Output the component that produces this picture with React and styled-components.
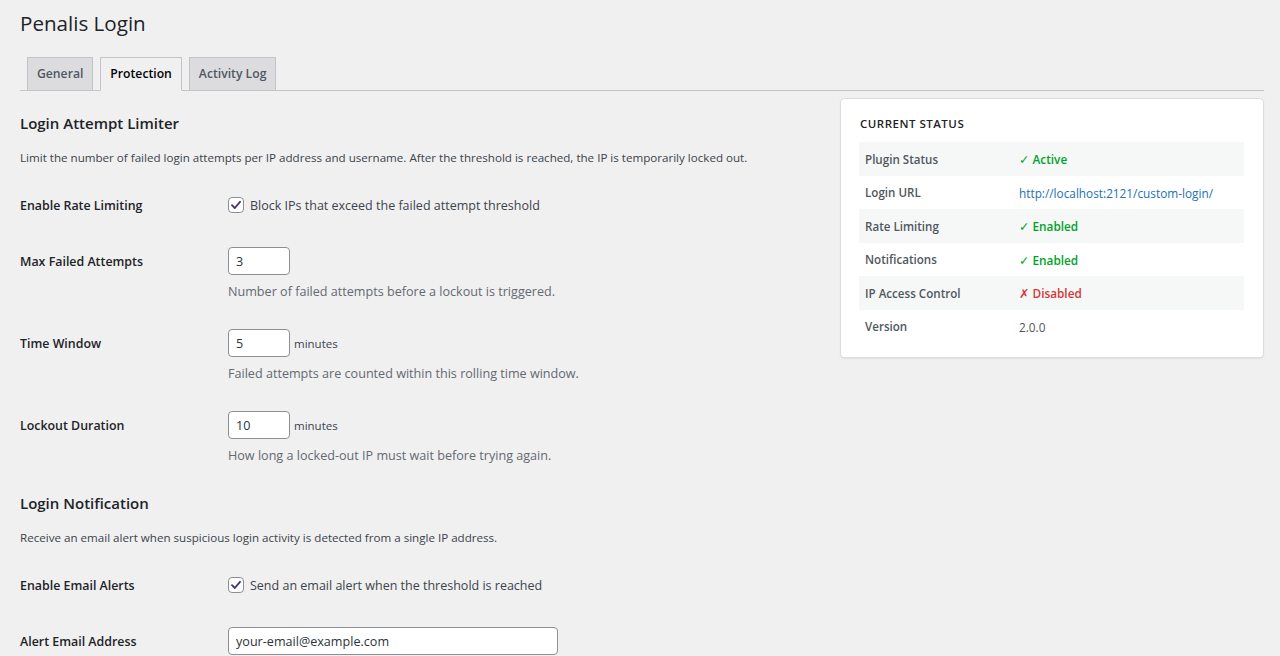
import React from "react";
import styled, { createGlobalStyle } from "styled-components";

const GlobalStyle = createGlobalStyle`
  html, body {
    margin: 0;
    padding: 0;
    background: #f0f0f1;
    color: #3c434a;
    font-family: "Open Sans", "Noto Sans", sans-serif;
    font-size: 13px;
  }
  * {
    box-sizing: border-box;
  }
`;

const Wrap = styled.div`
  padding: 9px 16px 0 20px;
  height: 656px;
  overflow: hidden;
`;

const Title = styled.h1`
  margin: 0;
  font-size: 20.6px;
  line-height: 28px;
  font-weight: 400;
  color: #1d2327;
`;

const TabBar = styled.nav`
  display: flex;
  margin-top: 20px;
  border-bottom: 1px solid #c3c4c7;
`;

const Tab = styled.a`
  margin-left: 7px;
  margin-bottom: -1px;
  padding: 4px 9px;
  font-size: 12.2px;
  line-height: 24px;
  font-weight: 600;
  border: 1px solid #c3c4c7;
  background: ${(p) => (p.$active ? "#f0f0f1" : "#dcdcde")};
  color: ${(p) => (p.$active ? "#000" : "#50575e")};
  border-bottom: 1px solid ${(p) => (p.$active ? "#f0f0f1" : "#c3c4c7")};
  text-decoration: none;
`;

const Columns = styled.div`
  display: flex;
  align-items: flex-start;
  gap: 20px;
`;

const Main = styled.div`
  flex: 1;
`;

const SectionTitle = styled.h2`
  margin: ${(p) => p.$top}px 0 0;
  font-size: 15px;
  line-height: 22px;
  font-weight: 600;
  color: #1d2327;
`;

const SectionIntro = styled.p`
  margin: 15px 0 10px;
  font-size: 11.6px;
  line-height: 18px;
  color: #3c434a;
`;

const FieldRow = styled.div`
  display: grid;
  grid-template-columns: 208px 1fr;
  padding: 14px 0;
`;

const FieldLabel = styled.label`
  height: 28px;
  padding-top: 2px;
  font-size: 12.4px;
  line-height: 26px;
  font-weight: 600;
  color: #1d2327;
`;

const FieldControl = styled.div`
  display: flex;
  flex-direction: column;
`;

const ControlLine = styled.div`
  display: flex;
  align-items: center;
  height: 28px;
  gap: 4px;
`;

const CheckLabel = styled.label`
  display: flex;
  align-items: center;
  gap: 6px;
  font-size: 12.5px;
  color: #3c434a;
`;

const Box = styled.span`
  width: 16px;
  height: 16px;
  border: 1px solid #8c8f94;
  border-radius: 4px;
  background: #fff;
  display: inline-flex;
  align-items: center;
  justify-content: center;
`;

const TextInput = styled.input`
  width: ${(p) => p.$width}px;
  height: 28px;
  padding: 0 7px;
  border: 1px solid #8c8f94;
  border-radius: 4px;
  background: #fff;
  font-family: inherit;
  font-size: 12.6px;
  color: #2c3338;
  outline: none;
`;

const Unit = styled.span`
  font-size: 11.5px;
  color: #3c434a;
`;

const Help = styled.p`
  margin: 7px 0 0;
  font-size: 12.6px;
  line-height: 19px;
  color: #646970;
`;

const Card = styled.aside`
  width: 424px;
  margin-top: 7px;
  padding: 16px 19px 14px 18px;
  background: #fff;
  border: 1px solid #dcdcde;
  border-radius: 4px;
  box-shadow: 0 1px 2px rgba(0, 0, 0, 0.06);
`;

const CardTitle = styled.h3`
  margin: 0 0 9px 1px;
  font-size: 11.5px;
  line-height: 18px;
  font-weight: 600;
  letter-spacing: 0.5px;
  text-transform: uppercase;
  color: #1d2327;
`;

const StatusRow = styled.div`
  display: grid;
  grid-template-columns: 154px 1fr;
  padding: 1px 6px 0;
  height: 33.5px;
  align-items: center;
  background: ${(p) => (p.$striped ? "#f6f7f7" : "transparent")};
`;

const StatusKey = styled.span`
  font-size: 11.6px;
  font-weight: 600;
  color: #50575e;
`;

const tones = {
  ok: "#00a32a",
  off: "#d63638",
  link: "#2271b1",
  plain: "#50575e",
};

const StatusValue = styled.span`
  font-size: 11.8px;
  font-weight: ${(p) => (p.$tone === "ok" || p.$tone === "off" ? 600 : 400)};
  color: ${(p) => tones[p.$tone]};
`;

const Mark = styled.span`
  font-family: "DejaVu Sans", sans-serif;
  font-size: 12.5px;
  font-weight: 700;
  margin-right: 3px;
`;

function Checkbox({ label }) {
  return (
    <CheckLabel>
      <Box>
        <svg width="12" height="12" viewBox="0 0 12 12">
          <path
            d="M2 6.2 L4.8 9 L10 2.8"
            fill="none"
            stroke="#4a3670"
            strokeWidth="1.9"
            strokeLinecap="round"
            strokeLinejoin="round"
          />
        </svg>
      </Box>
      {label}
    </CheckLabel>
  );
}

function NumberField({ label, value, unit, help }) {
  return (
    <FieldRow>
      <FieldLabel>{label}</FieldLabel>
      <FieldControl>
        <ControlLine>
          <TextInput $width={62} defaultValue={value} />
          {unit && <Unit>{unit}</Unit>}
        </ControlLine>
        <Help>{help}</Help>
      </FieldControl>
    </FieldRow>
  );
}

const status = [
  { key: "Plugin Status", mark: "✓", value: "Active", tone: "ok" },
  { key: "Login URL", value: "http://localhost:2121/custom-login/", tone: "link" },
  { key: "Rate Limiting", mark: "✓", value: "Enabled", tone: "ok" },
  { key: "Notifications", mark: "✓", value: "Enabled", tone: "ok" },
  { key: "IP Access Control", mark: "✗", value: "Disabled", tone: "off" },
  { key: "Version", value: "2.0.0", tone: "plain" },
];

export default function App() {
  return (
    <Wrap>
      <GlobalStyle />
      <Title>Penalis Login</Title>
      <TabBar>
        <Tab>General</Tab>
        <Tab $active>Protection</Tab>
        <Tab>Activity Log</Tab>
      </TabBar>
      <Columns>
        <Main>
          <SectionTitle $top={21}>Login Attempt Limiter</SectionTitle>
          <SectionIntro>
            Limit the number of failed login attempts per IP address and username. After the
            threshold is reached, the IP is temporarily locked out.
          </SectionIntro>
          <FieldRow>
            <FieldLabel>Enable Rate Limiting</FieldLabel>
            <ControlLine>
              <Checkbox label="Block IPs that exceed the failed attempt threshold" />
            </ControlLine>
          </FieldRow>
          <NumberField
            label="Max Failed Attempts"
            value="3"
            help="Number of failed attempts before a lockout is triggered."
          />
          <NumberField
            label="Time Window"
            value="5"
            unit="minutes"
            help="Failed attempts are counted within this rolling time window."
          />
          <NumberField
            label="Lockout Duration"
            value="10"
            unit="minutes"
            help="How long a locked-out IP must wait before trying again."
          />

          <SectionTitle $top={13}>Login Notification</SectionTitle>
          <SectionIntro>
            Receive an email alert when suspicious login activity is detected from a single IP
            address.
          </SectionIntro>
          <FieldRow>
            <FieldLabel>Enable Email Alerts</FieldLabel>
            <ControlLine>
              <Checkbox label="Send an email alert when the threshold is reached" />
            </ControlLine>
          </FieldRow>
          <FieldRow>
            <FieldLabel>Alert Email Address</FieldLabel>
            <ControlLine>
              <TextInput $width={330} defaultValue="your-email@example.com" />
            </ControlLine>
          </FieldRow>
        </Main>

        <Card>
          <CardTitle>Current Status</CardTitle>
          {status.map((row, i) => (
            <StatusRow key={row.key} $striped={i % 2 === 0}>
              <StatusKey>{row.key}</StatusKey>
              <StatusValue $tone={row.tone}>
                {row.mark && <Mark>{row.mark}</Mark>}
                {row.value}
              </StatusValue>
            </StatusRow>
          ))}
        </Card>
      </Columns>
    </Wrap>
  );
}
